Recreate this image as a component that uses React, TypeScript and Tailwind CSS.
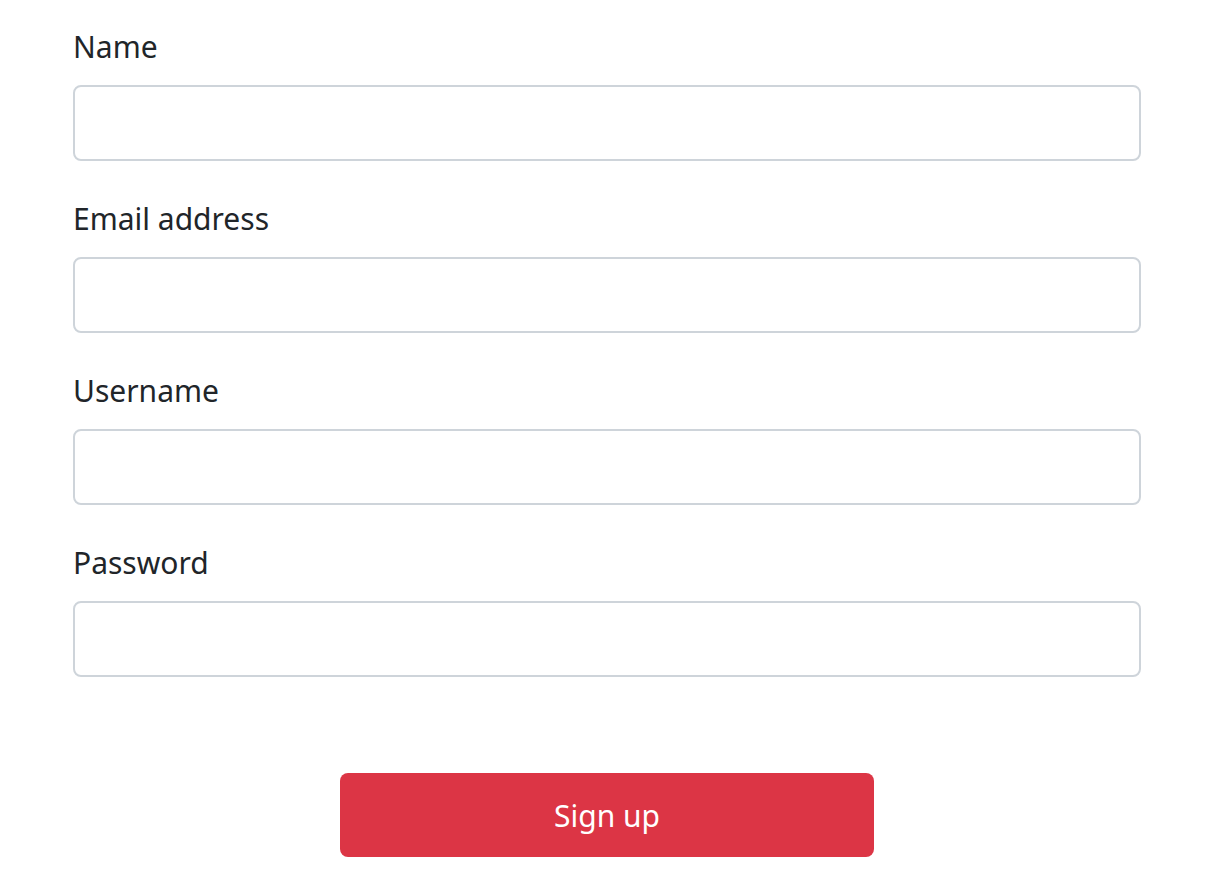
const fields = [
  { id: "name", label: "Name", type: "text" },
  { id: "email", label: "Email address", type: "email" },
  { id: "username", label: "Username", type: "text" },
  { id: "password", label: "Password", type: "password" },
];

const App = () => {
  return (
    <div
      className="min-h-[893px] bg-white pt-[21px] text-[#212529]"
      style={{ fontFamily: '"Noto Sans", "Open Sans", sans-serif' }}
    >
      <form className="ml-[73px] w-[1068px]" onSubmit={(e) => e.preventDefault()}>
        {fields.map((f) => (
          <div key={f.id} className="mb-8">
            <label htmlFor={f.id} className="mb-4 block pt-[3px] text-[30px] leading-[45px]">
              {f.label}
            </label>
            <input
              id={f.id}
              type={f.type}
              className="block h-[76px] w-full rounded-lg border-2 border-[#ced4da] bg-white px-6 text-[30px] outline-none"
            />
          </div>
        ))}

        <div className="mt-24 flex justify-center">
          <button
            type="submit"
            className="h-[84px] w-[534px] rounded-lg bg-[#dc3545] pt-[2px] text-[30px] leading-[48px] text-white"
          >
            Sign up
          </button>
        </div>
      </form>
    </div>
  );
};

export default App;
